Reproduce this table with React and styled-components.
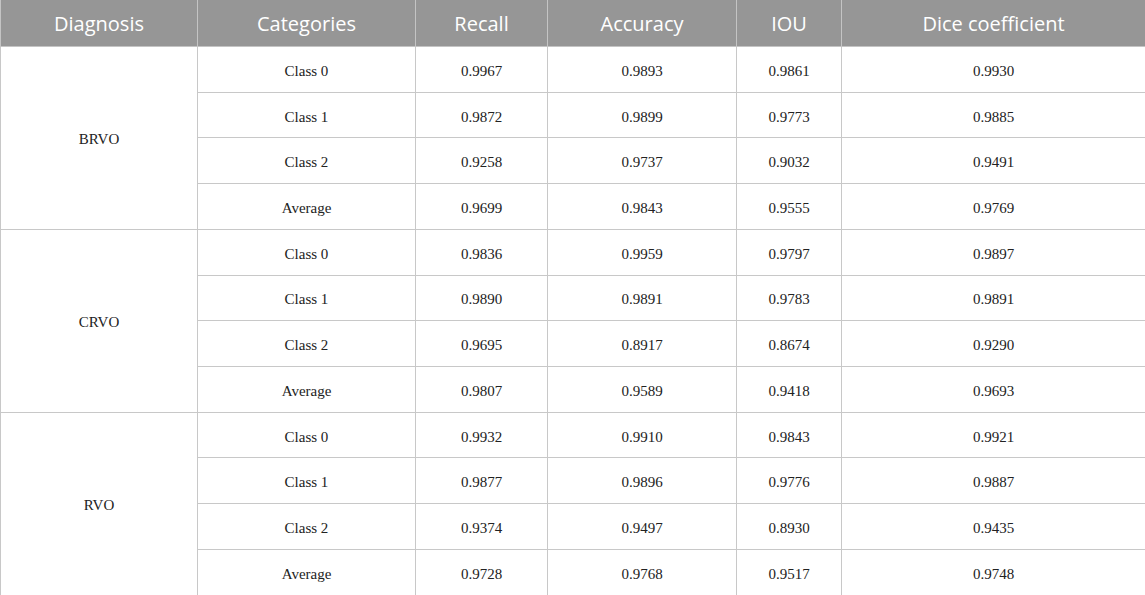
import React from 'react';
import styled, { createGlobalStyle } from 'styled-components';

const GlobalStyle = createGlobalStyle`
  html, body {
    margin: 0;
    padding: 0;
    background: #ffffff;
  }
`;

const Table = styled.table`
  width: 1145px;
  border-collapse: collapse;
  table-layout: fixed;
`;

const HeadCell = styled.th`
  height: 46px;
  padding: 0;
  background: #969696;
  color: #ffffff;
  font-family: "Open Sans", "Noto Sans", sans-serif;
  font-size: 20px;
  font-weight: 400;
  text-align: center;
  border: 1px solid #c4c4c4;
  border-top: none;
`;

const Cell = styled.td`
  height: 40.73px;
  padding: 4px 0 0;
  color: #222222;
  font-family: "Liberation Serif", "DejaVu Serif", serif;
  font-size: 15px;
  text-align: center;
  vertical-align: middle;
  border: 1px solid #c8c8c8;
`;

const columns = [
  { label: 'Diagnosis', width: 197 },
  { label: 'Categories', width: 218 },
  { label: 'Recall', width: 132 },
  { label: 'Accuracy', width: 189 },
  { label: 'IOU', width: 105 },
  { label: 'Dice coefficient', width: 304 },
];

const groups = [
  {
    name: 'BRVO',
    rows: [
      ['Class 0', '0.9967', '0.9893', '0.9861', '0.9930'],
      ['Class 1', '0.9872', '0.9899', '0.9773', '0.9885'],
      ['Class 2', '0.9258', '0.9737', '0.9032', '0.9491'],
      ['Average', '0.9699', '0.9843', '0.9555', '0.9769'],
    ],
  },
  {
    name: 'CRVO',
    rows: [
      ['Class 0', '0.9836', '0.9959', '0.9797', '0.9897'],
      ['Class 1', '0.9890', '0.9891', '0.9783', '0.9891'],
      ['Class 2', '0.9695', '0.8917', '0.8674', '0.9290'],
      ['Average', '0.9807', '0.9589', '0.9418', '0.9693'],
    ],
  },
  {
    name: 'RVO',
    rows: [
      ['Class 0', '0.9932', '0.9910', '0.9843', '0.9921'],
      ['Class 1', '0.9877', '0.9896', '0.9776', '0.9887'],
      ['Class 2', '0.9374', '0.9497', '0.8930', '0.9435'],
      ['Average', '0.9728', '0.9768', '0.9517', '0.9748'],
    ],
  },
];

export default function App() {
  return (
    <>
      <GlobalStyle />
      <Table>
        <colgroup>
          {columns.map((c) => (
            <col key={c.label} style={{ width: c.width }} />
          ))}
        </colgroup>
        <thead>
          <tr>
            {columns.map((c) => (
              <HeadCell key={c.label}>{c.label}</HeadCell>
            ))}
          </tr>
        </thead>
        <tbody>
          {groups.map((g) =>
            g.rows.map((r, i) => (
              <tr key={g.name + i}>
                {i === 0 && <Cell rowSpan={g.rows.length}>{g.name}</Cell>}
                {r.map((v, j) => (
                  <Cell key={j}>{v}</Cell>
                ))}
              </tr>
            ))
          )}
        </tbody>
      </Table>
    </>
  );
}
